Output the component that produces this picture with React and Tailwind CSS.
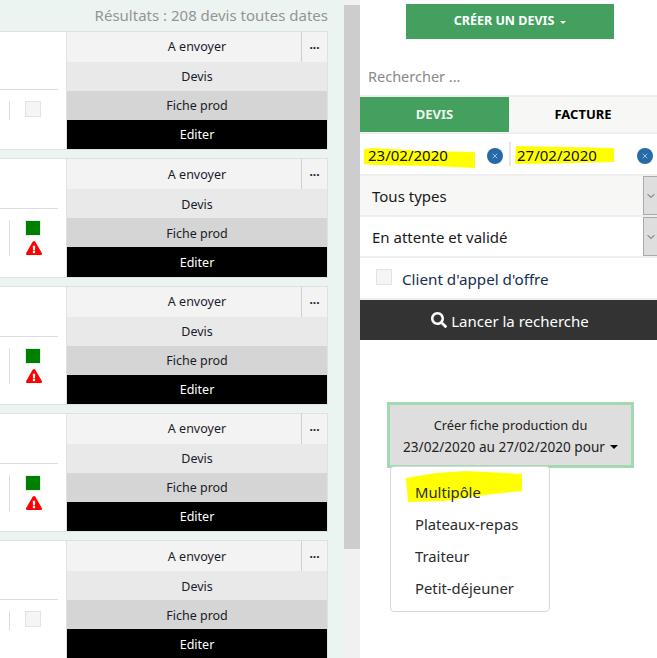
import React from 'react';
import { FaExclamationTriangle, FaSearch } from 'react-icons/fa';
import { ChevronDown, X } from 'lucide-react';

const cards = [false, true, true, true, false];

function Card({ flagged }) {
  return (
    <div className="flex h-[119.33px] mb-2 w-[328px] bg-white border border-[#dfe2e1] border-l-0">
      <div className="w-[66px] flex flex-col justify-center">
        <div className="h-[40.67px]" />
        <div className="h-px w-[58px] bg-[#dedede]" />
        <div className="flex pt-[11px] pb-3 pl-[9px]">
          <div className="w-px bg-[#dcdcdc]" />
          {flagged ? (
            <div className="ml-[15px] flex flex-col items-start">
              <div className="w-4 h-4 bg-[#008000] border border-[#e6efe6]" />
              <FaExclamationTriangle className="mt-1 ml-[1px] text-[16px] text-[#ff0000]" />
            </div>
          ) : (
            <div className="ml-[15px] h-[19px]">
              <div className="w-4 h-4 bg-[#f5f5f5] border border-[#e3e3e3]" />
            </div>
          )}
        </div>
      </div>
      <div className="flex-1 flex flex-col text-[12.5px] leading-none text-[#1b1b2b] border-l border-[#dfe2e1]">
        <div className="relative h-[30px] pt-px flex items-center justify-center bg-[#f3f3f3]">
          A envoyer
          <div className="absolute right-0 top-0 h-full w-[26px] flex items-center justify-center border-l border-[#cfcfcf] text-[12px] font-bold pb-1">...</div>
        </div>
        <div className="h-[29px] pt-[2px] flex items-center justify-center bg-[#e9e9e9]">Devis</div>
        <div className="h-[29px] pt-[2px] flex items-center justify-center bg-[#d5d5d5]">Fiche prod</div>
        <div className="flex-1 pt-[2px] flex items-center justify-center bg-black text-white">Editer</div>
      </div>
    </div>
  );
}

function Highlight({ className, points, w, h }) {
  return (
    <svg className={className} width={w} height={h} viewBox={`0 0 ${w} ${h}`}>
      <polygon points={points} fill="#ffff00" />
    </svg>
  );
}

function ClearBtn() {
  return (
    <span className="w-4 h-4 rounded-full bg-[#266ba8] flex items-center justify-center shrink-0">
      <X size={8} color="#dfe9f3" strokeWidth={2} />
    </span>
  );
}

function SelectRow({ label, bg }) {
  return (
    <div className={`h-[39px] flex items-center justify-between pl-3 text-[15px] text-[#1a1a1a] ${bg}`}>
      <span className="pt-[2px]">{label}</span>
      <span className="w-[14px] h-full bg-[#dedede] border border-[#aaaaaa] border-r-0 flex items-center justify-center">
        <ChevronDown size={12} color="#555" />
      </span>
    </div>
  );
}

export default function App() {
  return (
    <div className="flex h-[658px] w-[657px] overflow-hidden bg-white" style={{ fontFamily: '"Noto Sans", "Open Sans", sans-serif' }}>
      <div className="w-[344px] h-full bg-[#ecf4f2] overflow-hidden shrink-0">
        <div className="h-[31px] w-[328px] flex items-center justify-end text-[15px] text-[#949494]">
          Résultats : 208 devis toutes dates
        </div>
        {cards.map((f, i) => <Card key={i} flagged={f} />)}
      </div>

      <div className="w-[16px] h-full bg-[#f1f1f1] pt-[5px] shrink-0">
        <div className="h-[544px] bg-[#cdcdcd]" />
      </div>

      <div className="relative flex-1 flex flex-col bg-white">
        <div className="h-[44px] pt-1 pl-[46px]">
          <div className="w-[208px] h-[35px] bg-[#43a05f] flex items-center justify-center gap-[6px] text-white text-[12.5px] font-bold">
            CRÉER UN DEVIS
            <span className="w-0 h-0 mt-[1px] border-x-[3px] border-x-transparent border-t-[3px] border-t-white" />
          </div>
        </div>
        <div className="h-[53px] flex items-center pl-2 pt-[14px] text-[14.5px] text-[#8a8a8a] border-b-2 border-[#eeeeee]">
          Rechercher ...
        </div>
        <div className="h-[37px] flex text-[13px] font-bold border-b-2 border-[#eeeeee]">
          <div className="w-[149px] pt-[1px] bg-[#43a05f] text-[#eef7f1] flex items-center justify-center">DEVIS</div>
          <div className="flex-1 pt-[1px] bg-[#f7f7f5] text-black flex items-center justify-center">FACTURE</div>
        </div>
        <div className="h-[42px] flex items-stretch border-b-2 border-[#eeeeee]">
          <div className="relative w-[149px] flex items-center pl-2">
            <Highlight className="absolute left-[4px] top-[14px]" w={112} h={21} points="0,1 10,0 60,3 111,4 111,20 70,18 10,17 0,16" />
            <span className="relative text-[15px] leading-none text-[#111] mt-[2px]">23/02/2020</span>
            <span className="absolute left-[127px] top-[14px]"><ClearBtn /></span>
          </div>
          <div className="relative flex-1 flex items-center pl-2">
            <span className="absolute left-0 top-2 bottom-2 w-[2px] bg-[#e6e6e6]" />
            <Highlight className="absolute left-[6px] top-[10px]" w={100} h={22} points="1,2 50,3 99,4 99,18 60,19 0,20" />
            <span className="relative text-[15px] leading-none text-[#111] mt-[2px]">27/02/2020</span>
            <span className="absolute left-[128px] top-[14px]"><ClearBtn /></span>
          </div>
        </div>
        <div className="border-b-2 border-[#eeeeee]"><SelectRow label="Tous types" bg="bg-[#f7f7f5]" /></div>
        <div className="border-b-2 border-[#eeeeee]"><SelectRow label="En attente et validé" bg="bg-white" /></div>
        <div className="h-[42px] flex items-center pl-4 border-b-2 border-[#eeeeee] text-[15.2px] text-[#16304f]">
          <span className="w-4 h-4 bg-[#f5f5f5] border border-[#e3e3e3] -mt-[3px]" />
          <span className="ml-[10px] pt-[2px]">Client d'appel d'offre</span>
        </div>
        <div className="h-[40px] bg-[#333333] text-white text-[15px] flex items-center justify-center gap-1 pl-[3px]">
          <FaSearch className="text-[16px]" />
          <span className="pt-[2px]">Lancer la recherche</span>
        </div>

        <div className="relative ml-[27px] mt-[62px] w-[247px]">
          <div className="h-[66px] pt-[2px] border-[3px] border-[#a3d9b1] bg-[#dedede] flex flex-col items-center justify-center leading-[22px] text-[#222]">
            <span className="text-[12.8px]">Créer fiche production du</span>
            <span className="flex items-center gap-[5px] text-[13.6px]">
              23/02/2020 au 27/02/2020 pour
              <span className="w-0 h-0 border-x-[4px] border-x-transparent border-t-[4px] border-t-black" />
            </span>
          </div>
          <div className="absolute left-[3px] top-[64px] w-[160px] h-[146px] bg-white border border-[#d8d8d8] rounded-[4px] py-2 text-[14.8px] text-[#2b2b2b]">
            <div className="relative h-[32px] pl-6 pt-[2px] flex items-center">
              <Highlight className="absolute left-[15px] -top-1" w={117} h={32} points="0,7 30,2 60,0 116,3 116,20 70,25 40,30 2,31" />
              <span className="relative">Multipôle</span>
            </div>
            <div className="h-[32px] pl-6 pt-[2px] flex items-center">Plateaux-repas</div>
            <div className="h-[32px] pl-6 pt-[2px] flex items-center">Traiteur</div>
            <div className="h-[32px] pl-6 pt-[2px] flex items-center">Petit-déjeuner</div>
          </div>
        </div>
      </div>
    </div>
  );
}
